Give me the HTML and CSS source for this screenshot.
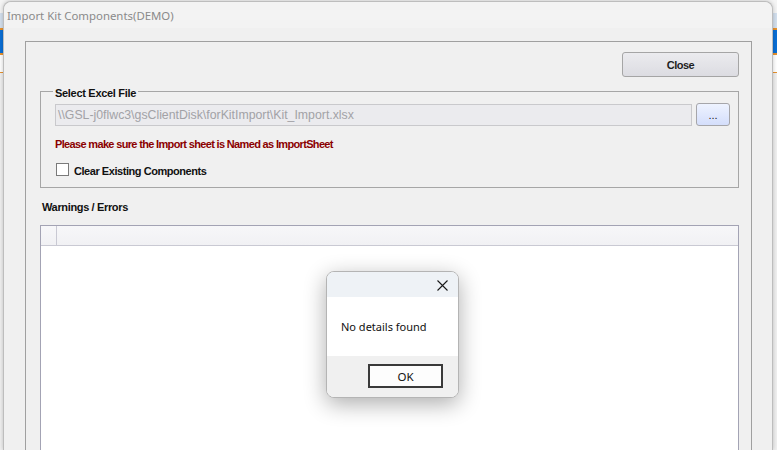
FILE: index.html
```html
<!DOCTYPE html>
<html>
<head>
<meta charset="utf-8">
<link rel="stylesheet" href="styles.css">
</head>
<body>
<div class="backapp">
  <div class="bg-top"></div>
  <div class="bg-tab"></div>
  <div class="bg-sel"></div>
  <div class="bg-row"></div>
  <div class="bg-rest"></div>
</div>

<div class="window">
  <div class="titlebar">Import Kit Components(DEMO)</div>
  <div class="panel">
    <div class="top-row">
      <button class="btn btn-close">Close</button>
    </div>
    <div class="group">
      <div class="legend">Select Excel File</div>
      <div class="file-row">
        <div class="path-input">\\GSL-j0flwc3\gsClientDisk\forKitImport\Kit_Import.xlsx</div>
        <button class="btn-browse">...</button>
      </div>
      <div class="warn-text">Please make sure the Import sheet is Named as ImportSheet</div>
      <div class="check-row">
        <span class="checkbox"></span>
        <span class="check-label">Clear Existing Components</span>
      </div>
    </div>
    <div class="section-label">Warnings / Errors</div>
    <div class="grid">
      <div class="grid-head">
        <div class="grid-corner"></div>
        <div class="grid-hcell"></div>
      </div>
      <div class="grid-body"></div>
    </div>
  </div>
</div>

<div class="msgbox">
  <div class="msg-title">
    <svg class="msg-x" width="11" height="11" viewBox="0 0 11 11"><path d="M0.5 0.5 L10.5 10.5 M10.5 0.5 L0.5 10.5" stroke="#1a1a1a" stroke-width="1.1" fill="none"/></svg>
  </div>
  <div class="msg-body">No details found</div>
  <div class="msg-foot">
    <button class="btn-ok">OK</button>
  </div>
</div>
</body>
</html>
```
FILE: styles.css
```css
html, body {
  margin: 0;
  padding: 0;
}
body {
  width: 777px;
  height: 450px;
  overflow: hidden;
  position: relative;
  background: #f0f0f0;
  font-family: "Liberation Sans", Arial, sans-serif;
}

/* background application behind the window */
.backapp {
  display: flex;
  flex-direction: column;
  height: 450px;
}
.bg-top { height: 13px; background: #f4f4f4; }
.bg-tab { height: 15px; background: #d3e0ee; }
.bg-sel {
  height: 23px;
  background: #0a6fd6;
  border-top: 2px solid #e8912c;
  border-bottom: 2px solid #e8912c;
}
.bg-row { height: 17px; background: #fff; border-bottom: 1px solid #e8912c; }
.bg-rest { flex: 1; background: #f0f0f0; }

/* main window */
.window {
  position: absolute;
  left: 3px;
  top: 1px;
  width: 770px;
  height: 449px;
  box-sizing: border-box;
  background: #f0f0f0;
  border: 1px solid #bdbdbd;
  border-bottom: none;
  border-radius: 8px 8px 0 0;
  box-shadow: 0 0 4px rgba(0, 0, 0, 0.22);
  display: flex;
  flex-direction: column;
}
.titlebar {
  height: 26px;
  padding-left: 3px;
  background: #f3f3f3;
  border-radius: 8px 8px 0 0;
  color: #8a8a8a;
  font: 11.4px "Noto Sans", "Open Sans", sans-serif;
  line-height: 28px;
}
.panel {
  margin: 13px 20px 0 21px;
  flex: 1;
  border: 1px solid #a0a0a0;
  border-bottom: none;
  display: flex;
  flex-direction: column;
}
.top-row {
  display: flex;
  justify-content: flex-end;
  padding: 10px 12px 0 0;
}
.btn-close {
  width: 117px;
  height: 25px;
  border: 1px solid #a5a5a5;
  border-radius: 3px;
  background: linear-gradient(#ebebee, #dcdce2);
  font: bold 11px "Liberation Sans", Arial, sans-serif;
  letter-spacing: -0.5px;
  color: #1e1e1e;
  padding: 0;
}

.group {
  margin: 14px 12px 0 14px;
  height: 97px;
  box-sizing: border-box;
  border: 1px solid #a6a6a6;
  padding: 0 8px 0 14px;
}
.legend {
  margin: -5px 0 0 -2px;
  width: fit-content;
  height: 14px;
  line-height: 14px;
  padding: 0 2px;
  background: #f0f0f0;
  font: bold 11px "Liberation Sans", Arial, sans-serif;
  color: #111;
  letter-spacing: -0.3px;
}
.file-row {
  display: flex;
  align-items: flex-end;
  gap: 4px;
  margin-top: 2px;
  height: 23px;
}
.path-input {
  flex: 1;
  height: 22px;
  box-sizing: border-box;
  border: 1px solid #c9c9cc;
  background: #ebebee;
  color: #a2a2a6;
  font: 12.3px "Liberation Sans", Arial, sans-serif;
  line-height: 20px;
  padding-left: 2px;
}
.btn-browse {
  width: 34px;
  height: 23px;
  border: 1px solid #a6a6aa;
  border-radius: 3px;
  background: linear-gradient(#eef3ff, #d4defb);
  font: 11px "Liberation Sans", Arial, sans-serif;
  color: #222;
  padding: 0;
}
.warn-text {
  margin-top: 12px;
  height: 14px;
  line-height: 14px;
  font: bold 11px "Liberation Sans", Arial, sans-serif;
  letter-spacing: -0.66px;
  color: #8b0000;
}
.check-row {
  display: flex;
  align-items: center;
  margin-top: 11px;
  height: 13px;
  padding-left: 1px;
}
.checkbox {
  width: 11px;
  height: 11px;
  border: 1px solid #7a7a7a;
  background: #fff;
}
.check-label {
  margin-left: 5px;
  font: bold 11px "Liberation Sans", Arial, sans-serif;
  letter-spacing: -0.45px;
  color: #111;
  line-height: 14px;
  padding-top: 2px;
}

.section-label {
  margin: 13px 0 0 16px;
  height: 14px;
  line-height: 14px;
  font: bold 11px "Liberation Sans", Arial, sans-serif;
  letter-spacing: -0.35px;
  color: #111;
}
.grid {
  margin: 10px 12px 0 14px;
  flex: 1;
  border: 1px solid #a3a3b4;
  border-bottom: none;
  display: flex;
  flex-direction: column;
  background: #fff;
}
.grid-head {
  height: 19px;
  display: flex;
  border-bottom: 1px solid #c9c9d3;
  background: linear-gradient(#f7f7f9, #f1f1f4);
}
.grid-corner {
  width: 15px;
  border-right: 1px solid #c9c9d3;
}
.grid-hcell { flex: 1; }
.grid-body { flex: 1; background: #fff; }

/* message box */
.msgbox {
  position: absolute;
  left: 326px;
  top: 271px;
  width: 131px;
  height: 125px;
  border: 1px solid #b4b4b4;
  border-radius: 8px;
  overflow: hidden;
  background: #fff;
  box-shadow: 0 6px 22px rgba(0, 0, 0, 0.32);
  display: flex;
  flex-direction: column;
  font: 11px "Noto Sans", "Open Sans", sans-serif;
}
.msg-title {
  height: 25px;
  background: #eef2f6;
  display: flex;
  justify-content: flex-end;
  align-items: center;
}
.msg-x {
  margin-right: 10px;
  margin-top: 2px;
}
.msg-body {
  height: 59px;
  padding-left: 14px;
  line-height: 59px;
  font-size: 11px;
  color: #111;
}
.msg-foot {
  flex: 1;
  background: #f0f0f0;
  padding: 8px 0 0 41px;
}
.btn-ok {
  width: 75px;
  height: 24px;
  box-sizing: border-box;
  border: 2px solid #3a3a3a;
  border-radius: 0;
  background: #fdfdfd;
  font: 11.5px "Noto Sans", "Open Sans", sans-serif;
  color: #111;
  padding: 0;
}
```
